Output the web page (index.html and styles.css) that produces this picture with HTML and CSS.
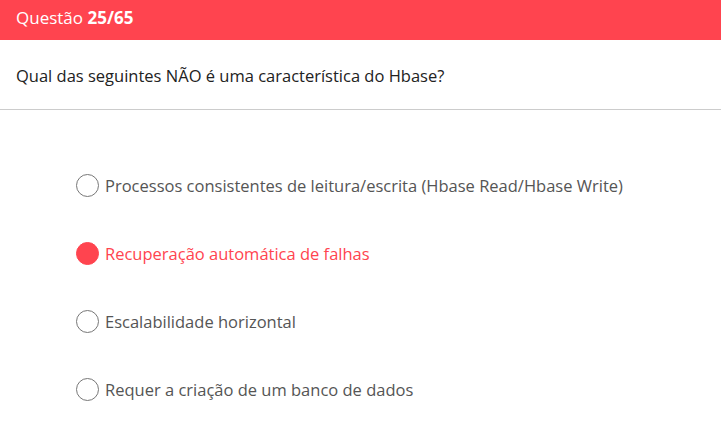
FILE: index.html
```html
<!DOCTYPE html>
<html lang="pt">
<head>
<meta charset="utf-8">
<link rel="stylesheet" href="styles.css">
</head>
<body>
<header class="bar">
  <span class="bar-label">Questão <strong>25/65</strong></span>
</header>
<section class="question">
  <p class="question-text">Qual das seguintes NÃO é uma característica do Hbase?</p>
</section>
<ul class="options">
  <li class="option"><span class="radio"></span><span class="option-text">Processos consistentes de leitura/escrita (Hbase Read/Hbase Write)</span></li>
  <li class="option selected"><span class="radio"></span><span class="option-text">Recuperação automática de falhas</span></li>
  <li class="option"><span class="radio"></span><span class="option-text">Escalabilidade horizontal</span></li>
  <li class="option"><span class="radio"></span><span class="option-text">Requer a criação de um banco de dados</span></li>
</ul>
</body>
</html>
```
FILE: styles.css
```css
html, body {
  margin: 0;
  padding: 0;
  background: #ffffff;
  font-family: "Open Sans", "Noto Sans", sans-serif;
}
.bar {
  height: 40px;
  background: #ff444f;
  display: flex;
  align-items: center;
  padding: 0 16px;
  box-sizing: border-box;
}
.bar-label {
  color: #ffffff;
  font-size: 17px;
  line-height: 1;
  margin-top: -5px;
}
.bar-label strong {
  font-weight: 700;
}
.question {
  height: 69px;
  border-bottom: 1px solid #cccccc;
  display: flex;
  align-items: center;
  padding: 0 16px;
}
.question-text {
  margin: 0 0 -2px;
  font-size: 16.5px;
  color: #222222;
}
.options {
  list-style: none;
  margin: 0;
  padding: 41px 0 0 76px;
}
.option {
  height: 68px;
  display: flex;
  align-items: center;
  gap: 6px;
  font-size: 16.5px;
  color: #555555;
}
.radio {
  width: 21px;
  height: 21px;
  border: 1px solid #777777;
  border-radius: 50%;
  box-sizing: content-box;
  flex: none;
}
.option.selected {
  color: #ff444f;
}
.option.selected .radio {
  background: #ff444f;
  border-color: #ff444f;
}
```
